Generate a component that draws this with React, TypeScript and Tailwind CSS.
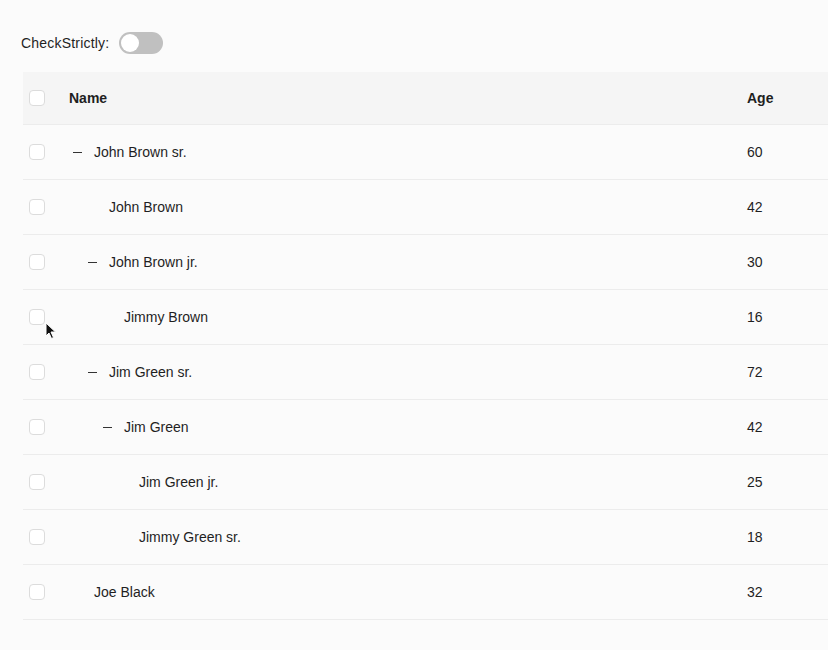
import React from "react";

interface Row {
  name: string;
  age: number;
  level: number;
  expanded?: boolean;
}

const rows: Row[] = [
  { name: "John Brown sr.", age: 60, level: 0, expanded: true },
  { name: "John Brown", age: 42, level: 1 },
  { name: "John Brown jr.", age: 30, level: 1, expanded: true },
  { name: "Jimmy Brown", age: 16, level: 2 },
  { name: "Jim Green sr.", age: 72, level: 1, expanded: true },
  { name: "Jim Green", age: 42, level: 2, expanded: true },
  { name: "Jim Green jr.", age: 25, level: 3 },
  { name: "Jimmy Green sr.", age: 18, level: 3 },
  { name: "Joe Black", age: 32, level: 0 },
];

const Checkbox: React.FC = () => (
  <span className="block w-4 h-4 rounded-[4px] border border-[#dcdcdc] bg-white" />
);

const ExpandIcon: React.FC<{ show: boolean }> = ({ show }) => (
  <span className="w-[17px] h-[17px] mr-2 flex items-center justify-center shrink-0">
    {show && <span className="block w-[9px] h-px bg-[#333]" />}
  </span>
);

const Cursor: React.FC = () => (
  <svg
    className="absolute left-[45px] top-[322px]"
    width="12"
    height="18"
    viewBox="0 0 12 18"
  >
    <path
      d="M1 1 L1 14 L4 11 L6.5 16.5 L8.5 15.5 L6 10 L10.5 10 Z"
      fill="#111"
      stroke="#fff"
      strokeWidth="1"
      strokeLinejoin="round"
    />
  </svg>
);

export default function App() {
  return (
    <div
      className="relative w-[828px] h-[650px] overflow-hidden bg-[#fbfbfb] text-[#1f1f1f]"
      style={{ fontFamily: '"Liberation Sans", Arial, sans-serif' }}
    >
      <div className="flex items-center gap-2 pl-[21px] pt-[32px] mb-[18px] text-sm">
        <span className="w-[90px] tracking-[0.2px]">CheckStrictly:</span>
        <span className="relative w-[44px] h-[22px] rounded-full bg-[#c0c0c0]">
          <span className="absolute left-[2px] top-[2px] w-[18px] h-[18px] rounded-full bg-white" />
        </span>
      </div>

      <div className="ml-[23px] w-[820px] text-sm">
        <div className="flex items-center h-[53px] bg-[#f5f5f5] border-b border-[#ececec] font-bold">
          <div className="w-[30px] pl-[6px] shrink-0">
            <Checkbox />
          </div>
          <div className="flex-1 pl-4">Name</div>
          <div className="w-[112px] pl-4 shrink-0">Age</div>
        </div>
        {rows.map((r) => (
          <div
            key={r.name}
            className="flex items-center h-[55px] border-b border-[#ececec]"
          >
            <div className="w-[30px] pl-[6px] shrink-0">
              <Checkbox />
            </div>
            <div className="flex-1 pl-4 flex items-center">
              {r.level === 1 && <span className="w-[15px] shrink-0" />}
              {r.level === 2 && <span className="w-[30px] shrink-0" />}
              {r.level === 3 && <span className="w-[45px] shrink-0" />}
              <ExpandIcon show={!!r.expanded} />
              <span>{r.name}</span>
            </div>
            <div className="w-[112px] pl-4 shrink-0">{r.age}</div>
          </div>
        ))}
      </div>

      <Cursor />
    </div>
  );
}
